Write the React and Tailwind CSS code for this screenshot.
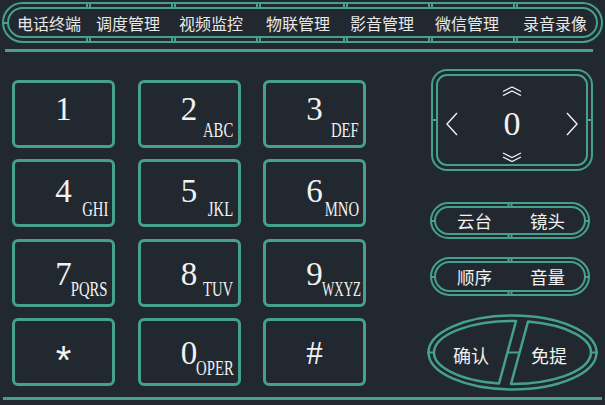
import React from "react";

const tabs = [
  { label: "电话终端", gap: "ml-[8px]" },
  { label: "调度管理", gap: "ml-[15px]" },
  { label: "视频监控", gap: "ml-[19px]" },
  { label: "物联管理", gap: "ml-[23px]" },
  { label: "影音管理", gap: "ml-[20px]" },
  { label: "微信管理", gap: "ml-[21px]" },
  { label: "录音录像", gap: "ml-[24px]" },
];

// separator ticks on the header border
const tabTicks = ["left-[77px]", "left-[162px]", "left-[247px]", "left-[334px]", "left-[419px]", "left-[504px]"];

const keys = [
  { d: "1", row: "pb-[10px]" },
  { d: "2", sub: "ABC", row: "pb-[10px]" },
  { d: "3", sub: "DEF", row: "pb-[10px]" },
  { d: "4", sub: "GHI", row: "pb-[4px]" },
  { d: "5", sub: "JKL", row: "pb-[4px]" },
  { d: "6", sub: "MNO", row: "pb-[4px]" },
  { d: "7", sub: "PQRS", row: "pt-[3px]" },
  { d: "8", sub: "TUV", row: "pt-[3px]" },
  { d: "9", sub: "WXYZ", row: "pt-[3px]", narrow: true },
  { d: "*", row: "pt-[3px]", font: "font-['Liberation_Sans',sans-serif] text-[40px] translate-y-[7px]" },
  { d: "0", sub: "OPER", row: "pt-[3px]" },
  { d: "#", row: "pt-[3px]" },
];

function Key({ k }) {
  return (
    <div
      className={`relative flex h-[68px] items-center justify-center rounded-[6px] border-[3px] border-[#45a08e] ${k.row}`}
    >
      <span className={`leading-[22px] text-[#f2f2f2] ${k.font || "font-['Liberation_Serif',serif] text-[33px]"}`}>
        {k.d}
      </span>
      {k.sub && (
        <span
          className={`absolute bottom-[8px] origin-right font-['Liberation_Serif',serif] text-[21px] leading-[14px] text-[#f2f2f2] ${
            k.narrow ? "right-[2px] scale-x-[0.62]" : "right-[4px] scale-x-[0.7]"
          }`}
        >
          {k.sub}
        </span>
      )}
    </div>
  );
}

function Pill({ left, right, className }) {
  return (
    <div
      className={`relative flex items-center rounded-full border-[6px] border-double border-[#45a08e] pl-[21px] ${className}`}
    >
      <span className="text-[17.5px] leading-none text-[#f2f2f2]">{left}</span>
      <span className="ml-[38px] text-[17.5px] leading-none text-[#f2f2f2]">{right}</span>
      <span className="absolute -top-[6px] left-1/2 h-[6px] w-[5px] -translate-x-1/2 border-x-2 border-[#45a08e]" />
      <span className="absolute -bottom-[6px] left-1/2 h-[6px] w-[5px] -translate-x-1/2 border-x-2 border-[#45a08e]" />
      <span className="absolute -left-[6px] top-1/2 h-[2px] w-[6px] -translate-y-1/2 bg-[#45a08e]" />
      <span className="absolute -right-[6px] top-1/2 h-[2px] w-[6px] -translate-y-1/2 bg-[#45a08e]" />
    </div>
  );
}

function NavBox() {
  return (
    <div className="relative ml-[4px] mt-[17px] flex h-[102px] w-[162px] flex-col items-center rounded-[16px] border-[7px] border-double border-[#45a08e] pt-[10px]">
      <svg width="20" height="10" viewBox="0 0 20 10" fill="none" stroke="#f2f2f2" strokeWidth="1.3">
        <polyline points="1,5.5 10,1 19,5.5" />
        <polyline points="1,9.5 10,5 19,9.5" />
      </svg>
      <div className="mt-[15px] flex h-[25px] w-full items-center justify-between px-[8px]">
        <svg width="12" height="24" viewBox="0 0 12 24" fill="none" stroke="#f2f2f2" strokeWidth="1.4">
          <polyline points="11,1 1,12 11,23" />
        </svg>
        <span className="font-['Liberation_Serif',serif] text-[34px] leading-none text-[#f2f2f2]">0</span>
        <svg width="12" height="24" viewBox="0 0 12 24" fill="none" stroke="#f2f2f2" strokeWidth="1.4">
          <polyline points="1,1 11,12 1,23" />
        </svg>
      </div>
      <svg className="mt-[16px]" width="20" height="11" viewBox="0 0 20 11" fill="none" stroke="#f2f2f2" strokeWidth="1.3">
        <polyline points="1,1 10,5.5 19,1" />
        <polyline points="1,5 10,9.5 19,5" />
      </svg>
      <span className="absolute -left-[7px] top-1/2 h-[2px] w-[7px] -translate-y-1/2 bg-[#45a08e]" />
      <span className="absolute -right-[7px] top-1/2 h-[2px] w-[7px] -translate-y-1/2 bg-[#45a08e]" />
    </div>
  );
}

function OvalButton() {
  return (
    <div className="relative mt-[18px] flex h-[77px] w-[171px] items-center">
      <svg className="absolute inset-0" width="171" height="77" viewBox="0 0 171 77" fill="none" stroke="#45a08e" strokeWidth="2.5" strokeLinejoin="round">
        <ellipse cx="85.5" cy="38.5" rx="84" ry="37" />
        <path d="M89 7.03 A78.5 31.5 0 0 0 72 69.53 Z" />
        <path d="M101 7.62 A78.5 31.5 0 0 1 84 69.99 Z" />
        <line x1="80.4" y1="38.5" x2="92.6" y2="38.5" strokeWidth="2" />
        <line x1="0" y1="38.5" x2="7" y2="38.5" strokeWidth="2" />
        <line x1="164" y1="38.5" x2="171" y2="38.5" strokeWidth="2" />
      </svg>
      <span className="relative ml-[26px] mt-[4px] text-[18px] leading-none text-[#f2f2f2]">确认</span>
      <span className="relative ml-[42px] mt-[4px] text-[18px] leading-none text-[#f2f2f2]">免提</span>
    </div>
  );
}

export default function App() {
  return (
    <div className="h-[405px] w-[605px] overflow-hidden bg-[#22282f] font-['Noto_Sans_CJK_SC',sans-serif]">
      {/* top tabs */}
      <div className="relative mx-[2px] mt-[2px] flex h-[41px] items-center rounded-full border-[7px] border-double border-[#45a08e]">
        {tabs.map((t) => (
          <span key={t.label} className={`${t.gap} shrink-0 text-[16px] leading-none text-[#e8e8e8]`}>
            {t.label}
          </span>
        ))}
        {tabTicks.map((pos) => (
          <React.Fragment key={pos}>
            <span className={`absolute -top-[7px] h-[7px] w-[5px] border-x-2 border-[#45a08e] ${pos}`} />
            <span className={`absolute -bottom-[7px] h-[7px] w-[5px] border-x-2 border-[#45a08e] ${pos}`} />
          </React.Fragment>
        ))}
        <span className="absolute -left-[7px] top-1/2 h-[2px] w-[7px] -translate-y-1/2 bg-[#45a08e]" />
      </div>
      <div className="ml-[5px] mt-[6px] h-[3px] w-[588px] bg-[#45a08e]" />

      {/* body */}
      <div className="flex h-[345px]">
        <div className="ml-[12px] mt-[28px] grid grid-cols-[repeat(3,103px)] gap-x-[22.5px] gap-y-[11.33px] self-start">
          {keys.map((k) => (
            <Key key={k.d} k={k} />
          ))}
        </div>
        <div className="ml-[61px] flex w-[171px] flex-col">
          <NavBox />
          <Pill left="云台" right="镜头" className="ml-[3px] mt-[31px] h-[37px] w-[160px]" />
          <Pill left="顺序" right="音量" className="ml-[3px] mt-[18px] h-[39px] w-[160px]" />
          <OvalButton />
        </div>
      </div>
      <div className="ml-[3px] h-[3px] w-[599px] bg-[#45a08e]" />
    </div>
  );
}
